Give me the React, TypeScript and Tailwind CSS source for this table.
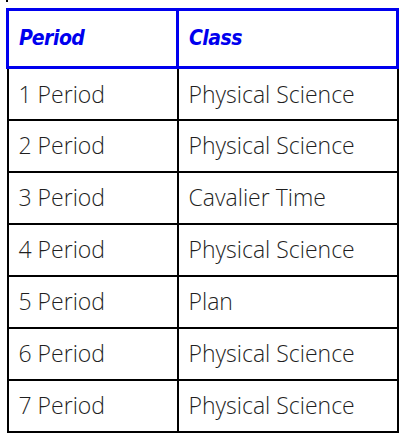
const rows: [string, string][] = [
  ['1 Period', 'Physical Science'],
  ['2 Period', 'Physical Science'],
  ['3 Period', 'Cavalier Time'],
  ['4 Period', 'Physical Science'],
  ['5 Period', 'Plan'],
  ['6 Period', 'Physical Science'],
  ['7 Period', 'Physical Science'],
];

export default function App() {
  return (
    <div className="w-[402px] h-[440px] bg-white overflow-hidden">
      <div className="ml-[6px] w-[2px] h-[2px] bg-black" />
      <table className="ml-[6px] mt-[6px] w-[393px] border-collapse table-fixed">
        <thead>
          <tr className="h-[58px]">
            <th className="w-[170px] border-[3px] border-[#0000ee] pl-[10px] text-left align-middle text-[21px] font-bold italic tracking-[-0.5px] text-[#0000ee] [font-family:'DejaVu_Sans_Condensed','DejaVu_Sans',sans-serif]">
              Period
            </th>
            <th className="border-[3px] border-[#0000ee] pl-[10px] text-left align-middle text-[21px] font-bold italic tracking-[-0.5px] text-[#0000ee] [font-family:'DejaVu_Sans_Condensed','DejaVu_Sans',sans-serif]">
              Class
            </th>
          </tr>
        </thead>
        <tbody>
          {rows.map(([p, c]) => (
            <tr key={p} className="h-[52px]">
              <td className="border-2 border-black pl-[10px] align-middle text-[23px] font-light text-[#1f1f1f] [font-family:'Open_Sans',sans-serif]">
                {p}
              </td>
              <td className="border-2 border-black pl-[10px] align-middle text-[23px] font-light text-[#1f1f1f] [font-family:'Open_Sans',sans-serif]">
                {c}
              </td>
            </tr>
          ))}
        </tbody>
      </table>
    </div>
  );
}
